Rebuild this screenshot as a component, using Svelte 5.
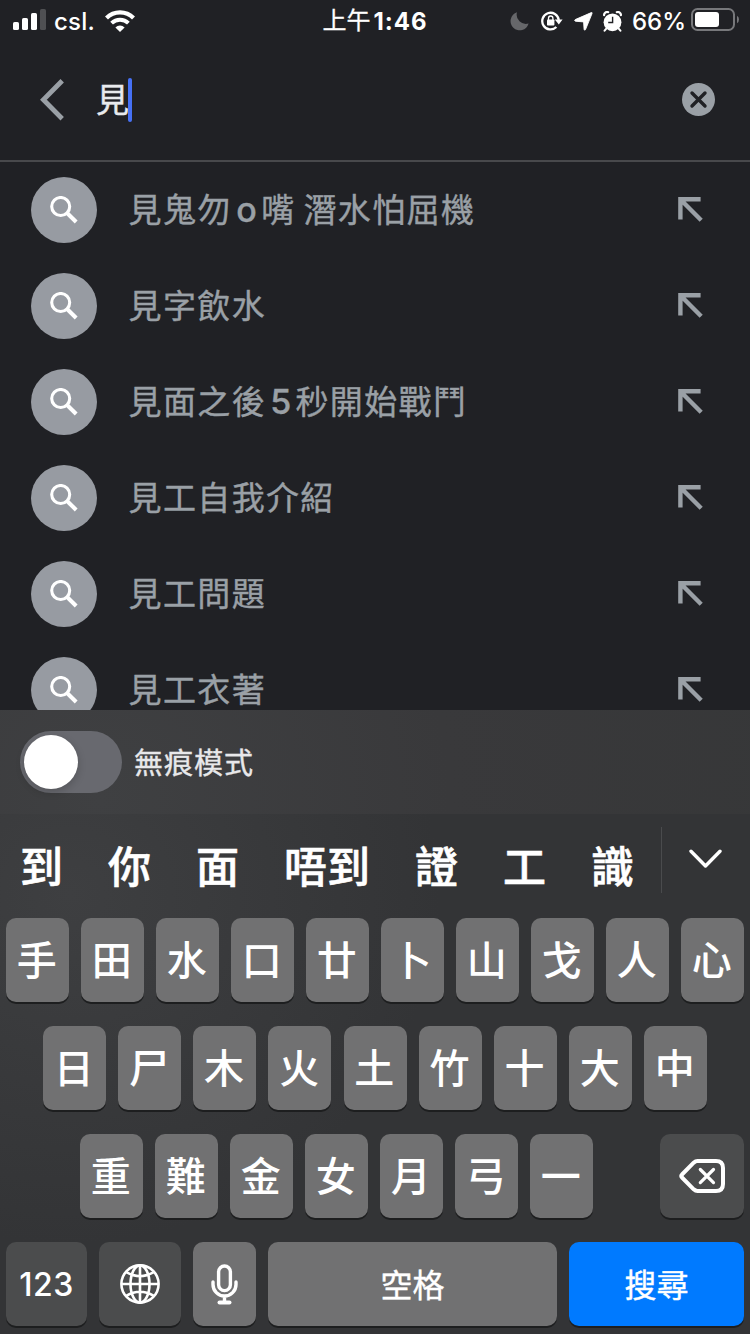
<script>
  const suggestions = [
    [{ t: '見鬼勿' }, { t: 'o', latin: true }, { t: '嘴' }, { gap: true }, { t: '潛水怕屈機' }],
    [{ t: '見字飲水' }],
    [{ t: '見面之後' }, { t: '5', latin: true }, { t: '秒開始戰鬥' }],
    [{ t: '見工自我介紹' }],
    [{ t: '見工問題' }],
    [{ t: '見工衣著' }]
  ];
  const candidates = ['到', '你', '面', '唔到', '證', '工', '識'];
  const row1 = [...'手田水口廿卜山戈人心'];
  const row2 = [...'日尸木火土竹十大中'];
  const row3 = [...'重難金女月弓一'];
</script>

<div class="screen">
  <header class="status">
    <div class="side left">
      <svg class="signal" width="33" height="21" viewBox="0 0 33 21" fill="#fff">
        <rect x="0" y="13" width="6" height="8" rx="1.6" />
        <rect x="9" y="9" width="6" height="12" rx="1.6" />
        <rect x="18" y="4" width="6" height="17" rx="1.6" />
        <rect x="27" y="0" width="6" height="21" rx="1.6" fill="#4f5053" />
      </svg>
      <span class="carrier">csl.</span>
      <svg class="wifi" width="30" height="22" viewBox="0 0 30 22" fill="none" stroke="#fff">
        <path d="M1.5 8 A19.2 19.2 0 0 1 28.5 8" stroke-width="4.2" />
        <path d="M6.6 13.2 A12 12 0 0 1 23.4 13.2" stroke-width="3.9" />
        <path d="M15 22 L10.4 17.4 A6.6 6.6 0 0 1 19.6 17.4 Z" fill="#fff" stroke="none" />
      </svg>
    </div>
    <div class="clock"><span class="ampm">上午</span><b>1:46</b></div>
    <div class="side right">
      <svg class="moon" width="19" height="19" viewBox="0 0 19 19"><path d="M7 .3 A9.2 9.2 0 1 0 18.6 11.6 A9.3 9.3 0 0 1 7 .3Z" fill="#66676a" /></svg>
      <svg class="lock" width="22" height="20" viewBox="0 0 22 20" fill="none" stroke="#fff">
        <path d="M17.8 9 A8.3 8.3 0 1 0 15.4 16" stroke-width="2.3" />
        <path d="M13.8 8.6 H21.6 L17.8 13.4Z" fill="#fff" stroke="none" />
        <rect x="6" y="8.5" width="7.4" height="6" rx=".8" fill="#fff" stroke="none" />
        <path d="M7.5 9 V7.2 a2.2 2.2 0 0 1 4.4 0 V9" stroke-width="1.3" />
      </svg>
      <svg class="nav" width="19" height="19" viewBox="0 0 19 19"><path d="M17.3 .6 Q18.5 .3 18 1.6 L11.5 17.6 Q10.5 18.8 10.1 17.4 L9.6 9.9 L1.3 9.2 Q0 8.6 1.2 7.6Z" fill="#fff" stroke="#fff" stroke-width=".9" /></svg>
      <svg class="alarm" width="19" height="21" viewBox="0 0 19 21" fill="none" stroke="#fff">
        <circle cx="9.5" cy="11.3" r="8.9" fill="#fff" stroke="none" />
        <path d="M1.1 4.2 A3 3 0 0 1 5.2 1.2 M17.9 4.2 A3 3 0 0 0 13.8 1.2" stroke-width="2.2" stroke-linecap="round" />
        <path d="M3.3 17.6 L1.6 19.7 M15.7 17.6 L17.4 19.7" stroke-width="2" stroke-linecap="round" />
        <path d="M9.6 5.8 V11.5 H5.2" stroke="#202125" stroke-width="1.4" />
      </svg>
      <span class="percent">66%</span>
      <svg class="battery" width="48" height="23" viewBox="0 0 48 23">
        <rect x="1" y="1" width="42" height="21" rx="5.5" fill="none" stroke="#77787b" stroke-width="2" />
        <rect x="4" y="4" width="24" height="15" rx="3" fill="#fff" />
        <path d="M46 7.8 Q48 9 48 11.5 T46 15.2Z" fill="#77787b" />
      </svg>
    </div>
  </header>

  <div class="searchbar">
    <svg width="24" height="42" viewBox="0 0 24 42"><path d="M22.2 1.8 L3.4 20.8 L22.2 39.8" fill="none" stroke="#9aa0a6" stroke-width="4.8" /></svg>
    <div class="query"><span>見</span><i class="caret"></i></div>
    <svg class="clear" width="33" height="33" viewBox="0 0 33 33">
      <circle cx="16.5" cy="16.5" r="16.5" fill="#9aa0a6" />
      <path d="M10 10 L23 23 M23 10 L10 23" stroke="#202125" stroke-width="3.4" stroke-linecap="round" />
    </svg>
  </div>

  <main class="list">
    {#each suggestions as parts}
      <div class="item">
        <span class="bubble">
          <svg width="28" height="28" viewBox="0 0 28 28" fill="none" stroke="#fff">
            <circle cx="10.7" cy="10.5" r="9" stroke-width="3.1" />
            <path d="M16.8 16.8 L26.2 26" stroke-width="4" />
          </svg>
        </span>
        <span class="label">{#each parts as p}{#if p.gap}<span class="gap">&nbsp;</span>{:else}<span class:latin={p.latin}>{p.t}</span>{/if}{/each}</span>
        <svg class="fill" width="25" height="25" viewBox="0 0 25 25"><path d="M2.4 22.4 V2.3 H22.6 M3 3 L23.2 23.2" fill="none" stroke="#9aa0a6" stroke-width="4.4" /></svg>
      </div>
    {/each}
  </main>

  <section class="incognito">
    <span class="toggle"><i></i></span>
    <span class="mode">無痕模式</span>
  </section>

  <section class="keyboard">
    <div class="candidates">
      <div class="words">{#each candidates as c}<span>{c}</span>{/each}</div>
      <div class="more">
        <svg width="33" height="20" viewBox="0 0 33 20"><path d="M2 2.2 L16.5 17 L31 2.2" fill="none" stroke="#fff" stroke-width="3.4" stroke-linecap="round" stroke-linejoin="round" /></svg>
      </div>
    </div>
    <div class="row">{#each row1 as k}<span class="key char">{k}</span>{/each}</div>
    <div class="row second">{#each row2 as k}<span class="key char">{k}</span>{/each}</div>
    <div class="row third">
      {#each row3 as k}<span class="key char">{k}</span>{/each}
      <span class="key dark delete">
        <svg width="46" height="34" viewBox="0 0 46 34" fill="none" stroke="#fff" stroke-linecap="round" stroke-linejoin="round">
          <path d="M18.5 2 H37 Q44 2 44 9 V25 Q44 32 37 32 H18.5 Q16.5 32 14.7 30.3 L3 18.5 Q1.4 17 3 15.5 L14.7 3.7 Q16.5 2 18.5 2Z" stroke-width="4" />
          <path d="M21.3 10.5 L34.5 23.6 M34.5 10.5 L21.3 23.6" stroke-width="3.2" />
        </svg>
      </span>
    </div>
    <div class="row">
      <span class="key dark digits">123</span>
      <span class="key dark globe">
        <svg width="40" height="40" viewBox="0 0 40 40" fill="none" stroke="#fff" stroke-width="2.6">
          <circle cx="20" cy="20" r="18.6" />
          <ellipse cx="20" cy="20" rx="9.5" ry="18.6" />
          <path d="M20 1.3 V38.7 M1.3 20 H38.7 M6.3 8.2 Q20 16.2 33.7 8.2 M6.3 31.8 Q20 23.8 33.7 31.8" />
        </svg>
      </span>
      <span class="key">
        <svg width="27" height="41" viewBox="0 0 27 41" fill="none" stroke="#fff" stroke-width="3.4" stroke-linecap="round">
          <rect x="7.6" y="2" width="11.8" height="24.6" rx="5.9" />
          <path d="M2 18 V20.5 A11.5 11.5 0 0 0 25 20.5 V18 M13.5 32.5 V38" />
          <path d="M8.5 38.6 H18.5" stroke-width="4" />
        </svg>
      </span>
      <span class="key word space">空格</span>
      <span class="key word go">搜尋</span>
    </div>
  </section>
</div>

<style>
  :global(body) { margin: 0; background: #202125; }
  .screen {
    width: 750px; height: 1334px; overflow: hidden;
    display: flex; flex-direction: column;
    background: #202125; color: #fff;
    font-family: Inter, "Noto Sans CJK TC", sans-serif;
  }
  svg { display: block; flex: none; }
  .status { height: 40px; flex: none; display: grid; grid-template-columns: 1fr auto 1fr; align-items: center; box-sizing: border-box; }
  .side { display: flex; align-items: center; }
  .left { padding-left: 13px; }
  .signal { margin-bottom: 3px; }
  .wifi { margin-bottom: 1px; }
  .carrier { margin-left: 8px; width: 51px; padding-top: 1px; font-size: 24px; font-weight: 500; letter-spacing: .2px; line-height: 40px; }
  .clock { display: flex; align-items: center; line-height: 40px; font-size: 24px; padding-top: 1px; }
  .ampm { font-weight: 400; margin-right: 3px; padding-bottom: 1px; -webkit-text-stroke: .3px #fff; }
  .clock b { font-weight: 700; letter-spacing: 1px; }
  .right { justify-content: flex-end; padding-right: 11px; }
  .moon { margin-top: 1px; }
  .lock { margin-left: 12px; }
  .nav { margin-left: 11px; }
  .alarm { margin-left: 10px; }
  .percent { margin-left: 10px; width: 59px; padding-top: 1px; font-size: 24px; font-weight: 500; line-height: 40px; white-space: nowrap; }
  .battery { margin-bottom: 3px; }
  .searchbar { height: 120px; box-sizing: content-box; flex: none; display: flex; align-items: center; padding: 0 35px 0 40px; border-bottom: 2px solid #48494c; }
  .searchbar > svg { margin-bottom: 1px; }
  .query { flex: 1; display: flex; align-items: center; margin-left: 32px; font-size: 33px; color: #e8eaed; line-height: 44px; -webkit-text-stroke: .4px #e8eaed; }
  .caret { width: 4px; height: 44px; border-radius: 2px; background: #4671f6; margin-left: -1px; }
  .list { height: 548px; flex: none; overflow: hidden; }
  .item { height: 96px; display: flex; align-items: center; padding: 0 47px 0 31px; }
  .bubble { width: 66px; height: 66px; border-radius: 50%; background: #979ba2; display: flex; align-items: center; justify-content: center; flex: none; }
  .label { flex: 1; display: flex; margin-left: 31.6px; padding-bottom: 1px; font-size: 33px; letter-spacing: 1.35px; color: #9aa0a6; line-height: 48px; white-space: nowrap; -webkit-text-stroke: .4px #9aa0a6; }
  .latin { width: 29.5px; text-align: center; font-size: 34px; font-weight: 500; letter-spacing: 0; }
  .gap { width: 8px; letter-spacing: 0; }
  .fill { margin-bottom: 2px; }
  .incognito {
    height: 104px; flex: none; display: flex; align-items: center; padding-left: 20px; gap: 12px;
    font-size: 29px; letter-spacing: 1px; color: #e8e8ea;
    background: radial-gradient(circle at 100px 90px, #3f4042, #39393b 350px, #363738 750px);
  }
  .mode { padding-bottom: 3px; -webkit-text-stroke: .4px #e8e8ea; }
  .toggle { width: 96px; height: 56px; padding: 3px; border-radius: 31px; background: #68696f; display: flex; align-items: center; }
  .toggle i { width: 54px; height: 54px; margin-left: 1px; border-radius: 50%; background: #fff; box-shadow: 0 3px 8px #0003; }
  .keyboard {
    flex: 1; padding: 0 6px; display: flex; flex-direction: column;
    background: radial-gradient(ellipse 370px 350px at 70px 80px, #3e3f41, #333436);
  }
  .candidates { height: 104px; flex: none; display: flex; }
  .words { width: 655px; display: flex; gap: 45px; padding-left: 14px; box-sizing: border-box; font-size: 43px; font-weight: 500; line-height: 106px; white-space: nowrap; -webkit-text-stroke: .6px #fff; }
  .more { height: 66px; margin-top: 13px; border-left: 1px solid #4a4b4d; padding-left: 27px; display: flex; align-items: center; }
  .more svg { margin-bottom: 2px; }
  .row { display: flex; gap: 12px; height: 84px; margin-bottom: 24px; flex: none; }
  .second { padding-left: 37px; gap: 12.125px; }
  .third { padding-left: 74px; }
  .key {
    width: 63px; height: 84px; border-radius: 10px; background: #717172;
    box-shadow: 0 2px 0 #1d1e1f; display: flex; align-items: center; justify-content: center;
    font-size: 40px; font-weight: 500; line-height: 84px; flex: none;
  }
  .char { box-sizing: border-box; padding: 2px 1.5px 0 0; }
  .dark { background: #4b4c4d; }
  .delete { width: 84px; margin-left: auto; }
  .digits { width: 81px; box-sizing: border-box; padding-top: 2px; font-size: 32px; font-weight: 500; letter-spacing: .5px; }
  .globe { width: 82px; }
  .word { box-sizing: border-box; padding-top: 4px; font-size: 32px; font-weight: 400; -webkit-text-stroke: .4px #fff; }
  .space { width: 289px; }
  .go { width: 175px; background: #007aff; }
</style>
